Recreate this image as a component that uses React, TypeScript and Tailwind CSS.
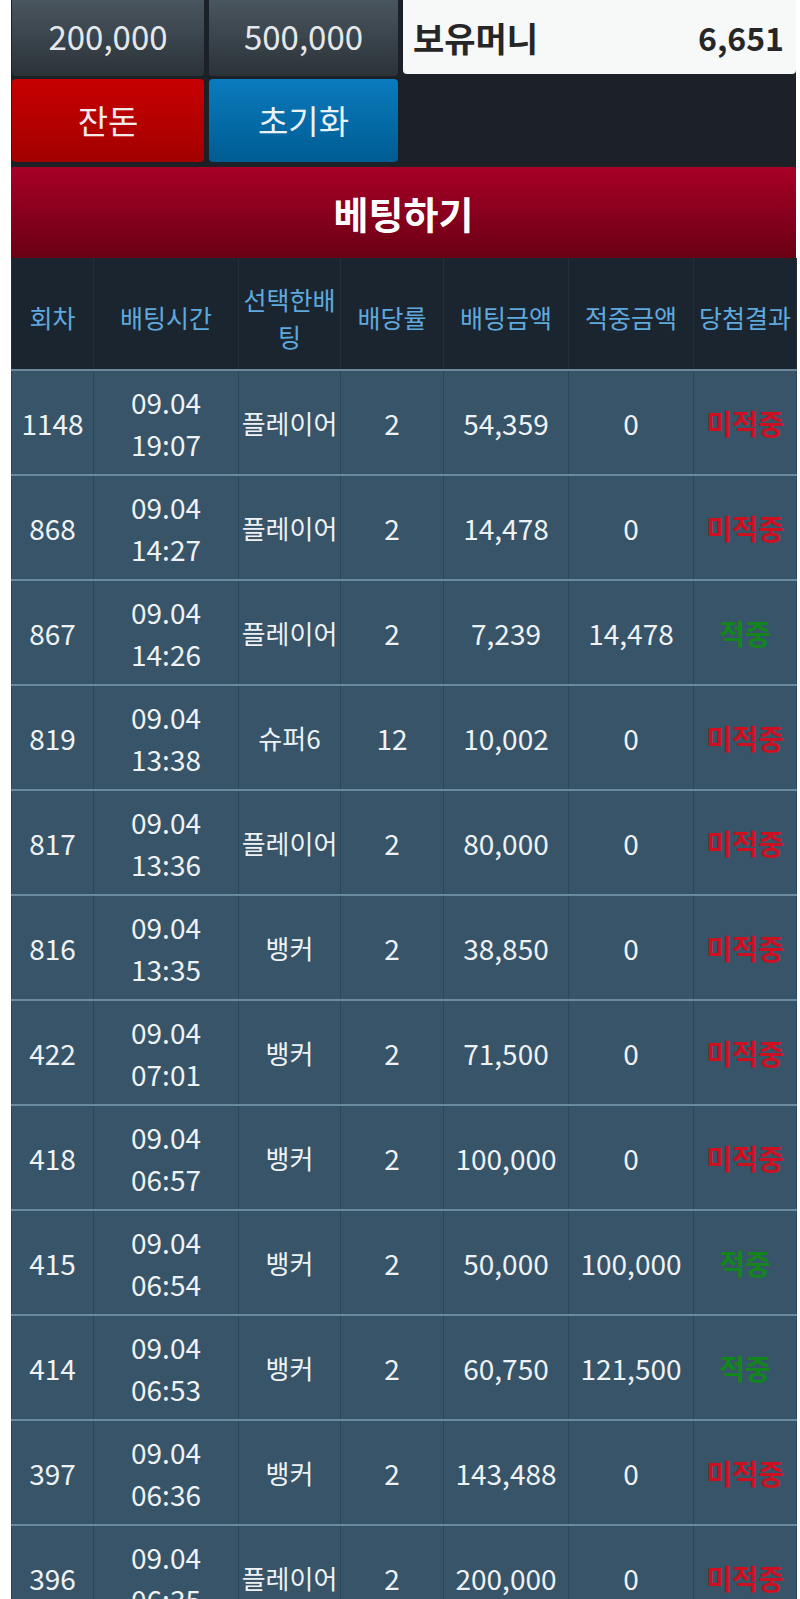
import React from 'react'

type Row = {
  round: string
  date: string
  time: string
  pick: string
  odds: string
  amount: string
  win: string
  hit: boolean
}

const ROWS: Row[] = [
  { round: '1148', date: '09.04', time: '19:07', pick: '플레이어', odds: '2', amount: '54,359', win: '0', hit: false },
  { round: '868', date: '09.04', time: '14:27', pick: '플레이어', odds: '2', amount: '14,478', win: '0', hit: false },
  { round: '867', date: '09.04', time: '14:26', pick: '플레이어', odds: '2', amount: '7,239', win: '14,478', hit: true },
  { round: '819', date: '09.04', time: '13:38', pick: '슈퍼6', odds: '12', amount: '10,002', win: '0', hit: false },
  { round: '817', date: '09.04', time: '13:36', pick: '플레이어', odds: '2', amount: '80,000', win: '0', hit: false },
  { round: '816', date: '09.04', time: '13:35', pick: '뱅커', odds: '2', amount: '38,850', win: '0', hit: false },
  { round: '422', date: '09.04', time: '07:01', pick: '뱅커', odds: '2', amount: '71,500', win: '0', hit: false },
  { round: '418', date: '09.04', time: '06:57', pick: '뱅커', odds: '2', amount: '100,000', win: '0', hit: false },
  { round: '415', date: '09.04', time: '06:54', pick: '뱅커', odds: '2', amount: '50,000', win: '100,000', hit: true },
  { round: '414', date: '09.04', time: '06:53', pick: '뱅커', odds: '2', amount: '60,750', win: '121,500', hit: true },
  { round: '397', date: '09.04', time: '06:36', pick: '뱅커', odds: '2', amount: '143,488', win: '0', hit: false },
  { round: '396', date: '09.04', time: '06:35', pick: '플레이어', odds: '2', amount: '200,000', win: '0', hit: false },
]

const WIDTHS = ['w-[82px]', 'w-[145px]', 'w-[102px]', 'w-[103px]', 'w-[125px]', 'w-[125px]', 'w-[103px]']
const TD = 'border-x border-[#2d475a] border-b-[2px] border-b-[#6a8aa0] p-0'

export default function App() {
  return (
    <div
      className="h-screen overflow-hidden bg-white pl-[11px] pr-[4px]"
      style={{ fontFamily: '"Noto Sans CJK KR", "Noto Sans", sans-serif' }}
    >
      <div className="bg-[#1b2127]">
        {/* top buttons */}
        <div className="flex gap-[5px] pl-[1px]">
          <div className="flex flex-col gap-[3px] w-[386px]">
            <div className="flex gap-[5px] -mt-[4px]">
              <button className="w-[192px] h-[80px] pt-[2px] rounded-[4px] bg-gradient-to-b from-[#4b5761] to-[#2b3339] text-[#e4e8ea] text-[33px]">200,000</button>
              <button className="w-[189px] h-[80px] pt-[2px] rounded-[4px] bg-gradient-to-b from-[#4b5761] to-[#2b3339] text-[#e4e8ea] text-[33px]">500,000</button>
            </div>
            <div className="flex gap-[5px]">
              <button className="w-[192px] h-[83px] rounded-[4px] bg-gradient-to-b from-[#c70000] to-[#a30000] text-[#f4eaea] text-[33px]">잔돈</button>
              <button className="w-[189px] h-[83px] rounded-[4px] bg-gradient-to-b from-[#0b7bbd] to-[#005c93] text-[#eaf2f8] text-[33px]">초기화</button>
            </div>
          </div>
          <div className="flex-1 self-start h-[74px] rounded-b-[4px] bg-[#f7f8f8] flex items-center justify-between pl-[10px] pr-[12px]">
            <span className="text-[34px] font-bold text-[#262626]">보유머니</span>
            <span className="text-[32px] font-semibold text-[#262626]">6,651</span>
          </div>
        </div>

        {/* bet banner */}
        <div className="mt-[5px] h-[91px] bg-gradient-to-b from-[#a80027] to-[#6a0014] flex items-center justify-center">
          <span className="text-white text-[38px] font-bold">베팅하기</span>
        </div>

        {/* history table */}
        <table className="w-full border-collapse table-fixed">
          <thead>
            <tr className="h-[112px] bg-[#1b2530] text-[25px] leading-[37px] text-[#5fa9de]">
              {['회차', '배팅시간', 'pick', '배당률', '배팅금액', '적중금액', '당첨결과'].map((h, i) => (
                <th
                  key={h}
                  className={`${WIDTHS[i]} font-normal whitespace-nowrap border-x border-[#232f3a] border-b-[2px] border-b-[#6b8799] p-0 pt-[8px]`}
                >
                  {h === 'pick' ? (
                    <>
                      선택한배
                      <br />팅
                    </>
                  ) : (
                    h
                  )}
                </th>
              ))}
            </tr>
          </thead>
          <tbody>
            {ROWS.map(r => (
              <tr key={r.round} className="h-[105px] bg-[#375469] text-[#eef2f4] text-[28px] text-center">
                <td className={TD}>{r.round}</td>
                <td className={`${TD} leading-[42px]`}>
                  <div>{r.date}</div>
                  <div>{r.time}</div>
                </td>
                <td className={`${TD} text-[26px] whitespace-nowrap`}>{r.pick}</td>
                <td className={TD}>{r.odds}</td>
                <td className={TD}>{r.amount}</td>
                <td className={TD}>{r.win}</td>
                <td className={`${TD} text-[28px] whitespace-nowrap`}>
                  {r.hit ? (
                    <span className="font-bold text-[#12861d]">적중</span>
                  ) : (
                    <span className="font-bold text-[#cc1020]">미적중</span>
                  )}
                </td>
              </tr>
            ))}
          </tbody>
        </table>
      </div>
    </div>
  )
}
